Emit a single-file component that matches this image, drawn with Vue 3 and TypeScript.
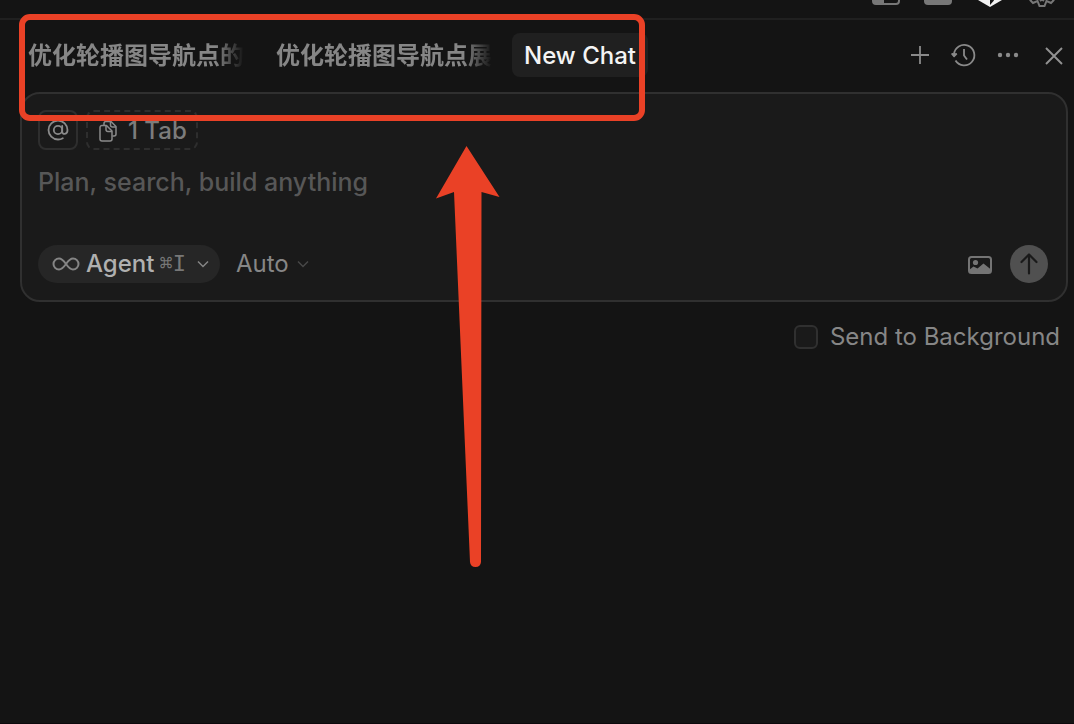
<script setup lang="ts">
import { ref } from 'vue'

interface Tab {
  id: number
  title: string
}

const tabs: Tab[] = [
  { id: 1, title: '优化轮播图导航点的' },
  { id: 2, title: '优化轮播图导航点展' },
  { id: 3, title: 'New Chat' },
]
const activeTab = ref<number>(3)
const prompt = ref<string>('')
const background = ref<boolean>(false)
</script>

<template>
  <div class="app">
    <header class="titlebar">
      <button class="icon-btn" type="button" aria-label="Toggle side bar">
        <svg width="28" height="28" viewBox="0 0 28 28">
          <path fill-rule="evenodd" fill="#777" d="M4 2h20a4 4 0 0 1 4 4v16a4 4 0 0 1-4 4H4a4 4 0 0 1-4-4V6a4 4 0 0 1 4-4zM12 4v20h12a2 2 0 0 0 2-2V6a2 2 0 0 0-2-2z" />
        </svg>
      </button>
      <button class="icon-btn" type="button" aria-label="Toggle panel">
        <svg width="28" height="28" viewBox="0 0 28 28">
          <rect y="2" width="28" height="24" rx="4" fill="#777" />
        </svg>
      </button>
      <button class="icon-btn" type="button" aria-label="Toggle chat">
        <svg width="28" height="28" viewBox="0 0 28 28">
          <path fill="#f2f2f2" d="M14 0l12 7v14l-12 7-12-7V7z" />
          <path fill="#141414" d="M14 10v16l3.500-4 7.500-13z" />
        </svg>
      </button>
      <button class="icon-btn" type="button" aria-label="Settings">
        <svg width="28" height="28" viewBox="0 0 28 28" fill="none" stroke="#777" stroke-width="2">
          <path d="M11.500 1h5l2.500 5.500 4-2.500 2.500 2.500-3 4 4.500 1v5l-4.500 1 3 4-2.500 2.500-4.500-2-2 5h-5l-2-5-4.500 2-2.500-2.500 3-4-4.500-1v-5l4.500-1-3-4L5 4l4 2.500z" />
          <path d="M12 22l2-1.500 2 1.500" />
          <circle cx="14" cy="14" r="4" />
        </svg>
      </button>
    </header>

    <div class="toolbar">
      <nav class="tabs" role="tablist" aria-label="Chats">
        <button
          v-for="tab in tabs"
          :key="tab.id"
          type="button"
          role="tab"
          class="tab"
          :class="{ active: tab.id === activeTab }"
          :aria-selected="tab.id === activeTab"
          @click="activeTab = tab.id"
        >
          <span class="tab-label">{{ tab.title }}</span>
        </button>
      </nav>
      <div class="actions">
        <button class="icon-btn" type="button" aria-label="New chat">
          <svg width="28" height="28" viewBox="0 0 28 28" fill="none" stroke="#8a8a8a" stroke-width="1.800">
            <path d="M14 5v18M5 14h18" />
          </svg>
        </button>
        <button class="icon-btn" type="button" aria-label="Chat history">
          <svg width="28" height="28" viewBox="0 0 28 28" fill="none" stroke="#8a8a8a" stroke-width="1.800">
            <path d="M4 13.500A10.200 10.200 0 1 1 5.500 19.500M14 8v6.500l3 4" />
            <path d="M1.200 12.300h5.800l-2.900 3.700z" fill="#8a8a8a" stroke="none" />
            <path d="M1.800 12.600l2.300 2.600 2.600-2.600" />
          </svg>
        </button>
        <button class="icon-btn" type="button" aria-label="More actions">
          <svg width="28" height="28" viewBox="0 0 28 28" fill="#8a8a8a">
            <circle cx="6" cy="14" r="2.200" />
            <circle cx="14" cy="14" r="2.200" />
            <circle cx="22" cy="14" r="2.200" />
          </svg>
        </button>
      </div>
      <button class="icon-btn" type="button" aria-label="Close">
        <svg width="28" height="28" viewBox="0 0 28 28" fill="none" stroke="#929292" stroke-width="1.900">
          <path d="M6 7l16 16M22 7L6 23" />
        </svg>
      </button>
    </div>

    <form class="composer" @submit.prevent>
      <div class="context">
        <button class="chip mention" type="button" aria-label="Add context">
          <svg width="24" height="24" viewBox="0 0 24 24" fill="none" stroke="#8a8a8a" stroke-width="1.800" stroke-linecap="round">
            <circle cx="12" cy="12" r="4.200" />
            <path d="M16.200 8v5.500c0 3.600 5.300 3.300 5.300-1.500A9.500 9.500 0 1 0 12 21.500c1.900 0 3.500-.500 4.800-1.300" />
          </svg>
        </button>
        <button class="chip files" type="button">
          <svg width="20" height="22" viewBox="0 0 20 22" fill="none" stroke="#8a8a8a" stroke-width="1.500" stroke-linejoin="round">
            <path d="M6 5V3.500A2 2 0 0 1 8 1.500h5l5 5v7.500a2 2 0 0 1-2 2h-1.500" />
            <path d="M12.500 1.500V5a2 2 0 0 0 2 2H18" />
            <path d="M4 5.500h4.500l5.500 5.500v8a2 2 0 0 1-2 2H4a2 2 0 0 1-2-2V7.500a2 2 0 0 1 2-2z" />
            <path d="M8 5.500v4a2 2 0 0 0 2 2h4" />
          </svg>
          <span>1 Tab</span>
        </button>
      </div>
      <textarea v-model="prompt" class="prompt" rows="1" aria-label="Message" placeholder="Plan, search, build anything"></textarea>
      <div class="controls">
        <button class="mode" type="button" aria-haspopup="menu">
          <svg width="28" height="16" viewBox="0 0 28 16" fill="none" stroke="#858585" stroke-width="2">
            <path d="M14 8C11.500 4.500 9.500 2.500 7 2.500a5.500 5.500 0 0 0 0 11c2.500 0 4.500-2 7-5.500s4.500-5.500 7-5.500a5.500 5.500 0 0 1 0 11c-2.500 0-4.500-2-7-5.500z" />
          </svg>
          <span class="mode-name">Agent</span>
          <kbd>⌘I</kbd>
          <svg class="chevron" width="12" height="8" viewBox="0 0 12 8" fill="none" stroke="#858585" stroke-width="1.500">
            <path d="M1 1.500l5 5 5-5" />
          </svg>
        </button>
        <button class="model" type="button" aria-haspopup="menu">
          <span>Auto</span>
          <svg width="12" height="8" viewBox="0 0 12 8" fill="none" stroke="#484848" stroke-width="1.500">
            <path d="M1 1.500l5 5 5-5" />
          </svg>
        </button>
        <span class="spacer"></span>
        <button class="icon-btn" type="button" aria-label="Attach image">
          <svg width="24" height="20" viewBox="0 -2 24 20">
            <rect x="1" y="1" width="22" height="16" rx="2.500" fill="none" stroke="#747474" stroke-width="2" />
            <circle cx="7.500" cy="6.500" r="2.600" fill="#747474" />
            <path fill="#747474" d="M1 14l4.500-3.500 4 2L15.500 7.500l7.500 6V17H1z" />
          </svg>
        </button>
        <button class="send" type="submit" aria-label="Send">
          <svg width="20" height="22" viewBox="0 0 20 22" fill="none" stroke="#1a1a1a" stroke-width="2.200" stroke-linecap="round" stroke-linejoin="round">
            <path d="M10 20.500V1.500M2.500 9L10 1.500 17.500 9" />
          </svg>
        </button>
      </div>
    </form>

    <div class="options">
      <label class="background">
        <input v-model="background" type="checkbox" />
        <span>Send to Background</span>
      </label>
    </div>

    <div class="highlight" aria-hidden="true"></div>
    <svg class="arrow" width="64" height="422" viewBox="0 0 64 422" aria-hidden="true">
      <path fill="#ea4126" d="M30.500 0L63.500 51l-18-5L45 416q-.500 5-5.500 5t-5.500-5L18 46 0 52.500z" />
    </svg>
  </div>
</template>

<style>
html,
body,
#app {
  height: 100%;
}

body {
  margin: 0;
  background: #141414;
}
</style>

<style scoped>
.app {
  position: relative;
  box-sizing: border-box;
  min-height: 100%;
  overflow: hidden;
  border-bottom: 1px solid #0c090c;
  background: #141414;
  color: #868686;
  font-family: Inter, "Noto Sans CJK SC", sans-serif;
  font-size: 24px;
  line-height: 32px;
}

button {
  display: flex;
  align-items: center;
  flex: none;
  margin: 0;
  padding: 0;
  border: 0;
  background: none;
  color: inherit;
  font: inherit;
  white-space: nowrap;
}

svg {
  display: block;
  flex: none;
}

.titlebar {
  display: flex;
  align-items: flex-end;
  justify-content: flex-end;
  gap: 24px;
  height: 18px;
  box-sizing: border-box;
  padding: 0 18px 11px;
  overflow: hidden;
}

.toolbar {
  display: flex;
  align-items: center;
  gap: 18px;
  padding: 13px 6px 15px 16px;
  border-top: 2px solid #202020;
}

.tabs {
  display: flex;
  flex: 1;
  gap: 8px;
  min-width: 0;
}

.tab {
  box-sizing: border-box;
  height: 44px;
  max-width: 240px;
  padding: 2px 12px 0;
  border-radius: 8px;
  font-weight: 600;
}

.tab-label {
  flex: 1;
  text-align: left;
  mask-image: linear-gradient(to left, transparent, #000 28px);
}

.tab.active {
  background: #202020;
  color: #f4f4f4;
  font-weight: 500;
}

.tab.active .tab-label {
  mask-image: none;
}

.actions {
  display: flex;
  gap: 16px;
}

.composer {
  display: flex;
  flex-direction: column;
  margin: 0 6px 0 20px;
  padding: 16px 16px 17px;
  border: 2px solid #303030;
  border-radius: 20px;
  background: #1a1a1a;
}

.context {
  display: flex;
  gap: 8px;
}

.chip {
  box-sizing: border-box;
  height: 40px;
  border: 2px solid #2e2e2e;
  border-radius: 8px;
}

.mention {
  justify-content: center;
  width: 40px;
}

.files {
  gap: 10px;
  padding: 2px 9px 0 10px;
  border-style: dashed;
  color: #7c7c7c;
  font-weight: 500;
}

.prompt {
  height: 32px;
  margin: 16px 0 47px;
  padding: 0;
  border: 0;
  outline: 0;
  resize: none;
  overflow: hidden;
  background: none;
  color: #d0d0d0;
  font: inherit;
  font-size: 25px;
  font-weight: 500;
}

.prompt::placeholder {
  color: #575757;
  opacity: 1;
}

.controls {
  display: flex;
  align-items: center;
}

.mode {
  height: 38px;
  padding: 0 11px 0 14px;
  border-radius: 19px;
  background: #262626;
}

.mode-name {
  margin: 0 5px 0 6px;
  color: #b0b0b0;
  font-weight: 500;
}

kbd {
  color: #777;
  font-family: "DejaVu Sans Mono", "DejaVu Sans", monospace;
  font-size: 22px;
}

.chevron {
  margin-left: 11px;
}

.model {
  gap: 8px;
  margin-left: 16px;
}

.spacer {
  flex: 1;
}

.send {
  justify-content: center;
  width: 38px;
  height: 38px;
  margin-left: 18px;
  margin-right: 2px;
  border-radius: 50%;
  background: #505050;
}

.options {
  display: flex;
  justify-content: flex-end;
  padding: 19px 14px 0;
}

.background {
  display: flex;
  align-items: center;
  gap: 12px;
}

.background input {
  appearance: none;
  box-sizing: border-box;
  width: 24px;
  height: 24px;
  margin: 0;
  border: 2px solid #303030;
  border-radius: 6px;
  background: #1a1a1a;
}

.highlight {
  position: absolute;
  top: 14px;
  left: 19px;
  box-sizing: border-box;
  width: 626px;
  height: 107px;
  border: 6px solid #ea4126;
  border-radius: 11px;
  pointer-events: none;
}

.arrow {
  position: absolute;
  top: 146px;
  left: 436px;
  pointer-events: none;
}
</style>
